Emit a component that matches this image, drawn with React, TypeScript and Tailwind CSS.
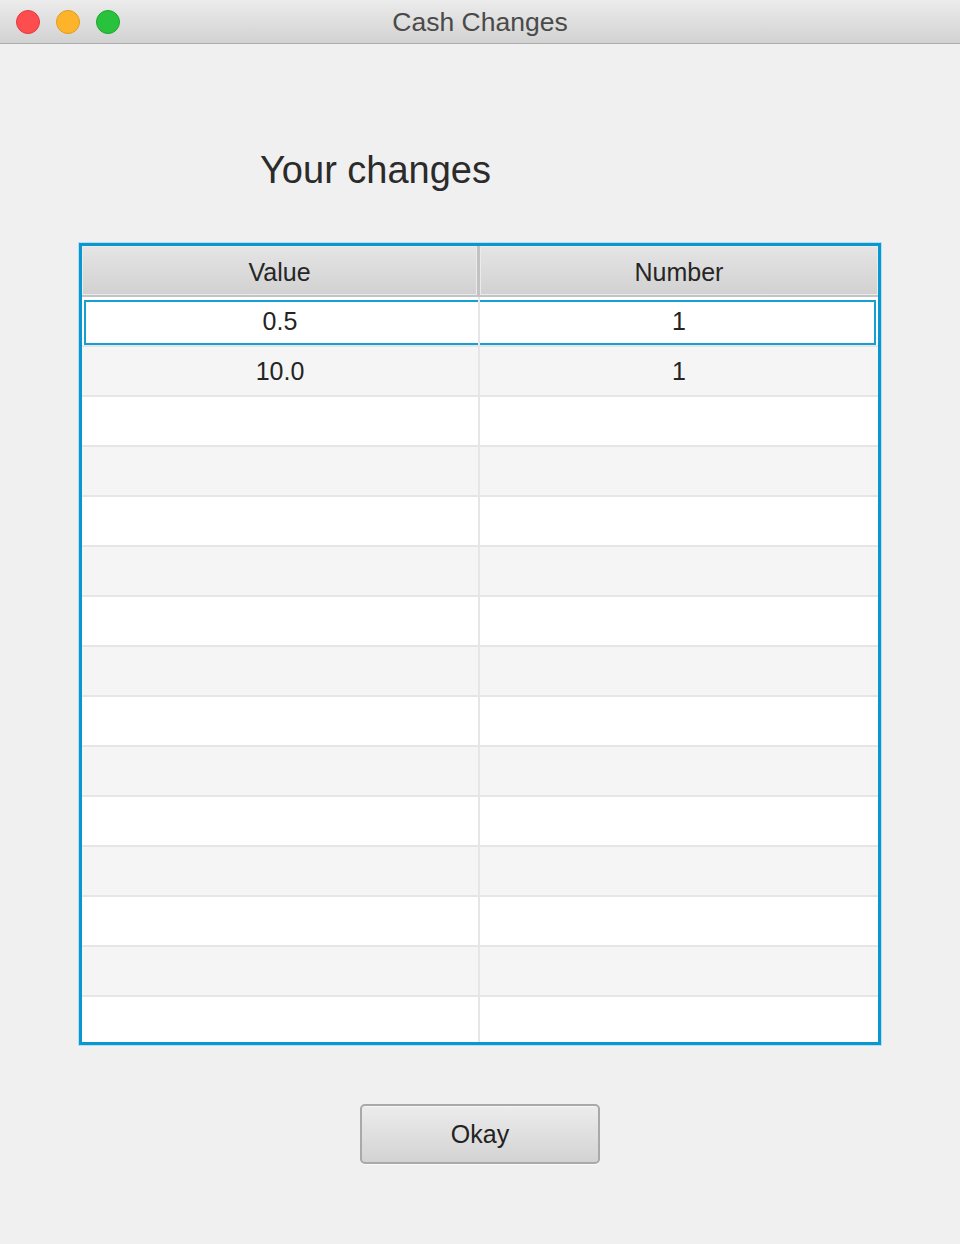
export default function App() {
  const data: [string, string][] = [
    ["0.5", "1"],
    ["10.0", "1"],
  ];
  const rows = Array.from({ length: 15 }, (_, i) => i);
  return (
    <div className="w-[960px] h-[1244px] bg-[#f0f0f0] flex flex-col font-['Liberation_Sans',Arial,sans-serif]">
      {/* Title bar */}
      <div className="h-[44px] shrink-0 grid grid-cols-[1fr_auto_1fr] items-center border-b border-[#adadad] bg-linear-to-b from-[#ececec] to-[#d2d2d2]">
        <div className="flex gap-4 pl-4">
          <div className="w-6 h-6 rounded-full bg-[#fd4d4f] border border-[#e23a3d]" />
          <div className="w-6 h-6 rounded-full bg-[#fdb42a] border border-[#e09d1c]" />
          <div className="w-6 h-6 rounded-full bg-[#29c23c] border border-[#1ea42d]" />
        </div>
        <div className="pt-[2px] text-[26.5px] leading-none text-[#4a4a4a]">Cash Changes</div>
        <div />
      </div>

      {/* Heading */}
      <div className="mt-[104px] pl-[260px] text-[38px] leading-[44px] text-[#2b2b2b]">Your changes</div>

      {/* Table */}
      <div className="mt-[51px] ml-[79px] w-[802px] h-[802px] shrink-0 border-[3px] border-[#0897cf] shadow-[0_0_0_1px_#b8dff0] flex flex-col bg-white">
        <div className="h-[51px] shrink-0 flex border-b-2 border-[#c4c4c4]">
          <div className="w-[395px] pt-[4px] flex items-center justify-center bg-linear-to-b from-[#e5e5e5] to-[#d1d1d1] shadow-[inset_0_0_0_1px_#ebebeb] text-[25px] text-[#262626]">
            Value
          </div>
          <div className="w-[3px] bg-[#c2c2c2]" />
          <div className="flex-1 pt-[4px] flex items-center justify-center bg-linear-to-b from-[#e5e5e5] to-[#d1d1d1] shadow-[inset_0_0_0_1px_#ebebeb] text-[25px] text-[#262626]">
            Number
          </div>
        </div>
        <div className="flex-1 overflow-hidden flex flex-col">
          {rows.map((i) => {
            const d = data[i];
            return (
              <div
                key={i}
                className={`relative h-[50px] shrink-0 flex border-b-2 border-[#e6e6e6] ${i % 2 === 0 ? "bg-white" : "bg-[#f5f5f5]"}`}
              >
                {i === 0 && (
                  <div className="absolute left-[2px] right-[2px] top-[3px] bottom-0 border-2 border-[#13a1d3]" />
                )}
                <div className="relative z-10 w-[398px] pt-[2px] border-r-2 border-[#e6e6e6] flex items-center justify-center text-[25px] text-[#242424]">
                  {d ? d[0] : ""}
                </div>
                <div className="relative z-10 flex-1 pt-[2px] flex items-center justify-center text-[25px] text-[#242424]">
                  {d ? d[1] : ""}
                </div>
              </div>
            );
          })}
        </div>
      </div>

      {/* Button */}
      <div className="mt-[59px] mx-auto w-[240px] h-[60px] pt-[2px] rounded-[5px] border-2 border-[#a9a9a9] bg-linear-to-b from-[#ececec] to-[#d3d3d3] shadow-[inset_0_1px_0_#f7f7f7,0_1px_0_#fafafa] flex items-center justify-center text-[25px] text-[#222222]">
        Okay
      </div>
    </div>
  );
}
